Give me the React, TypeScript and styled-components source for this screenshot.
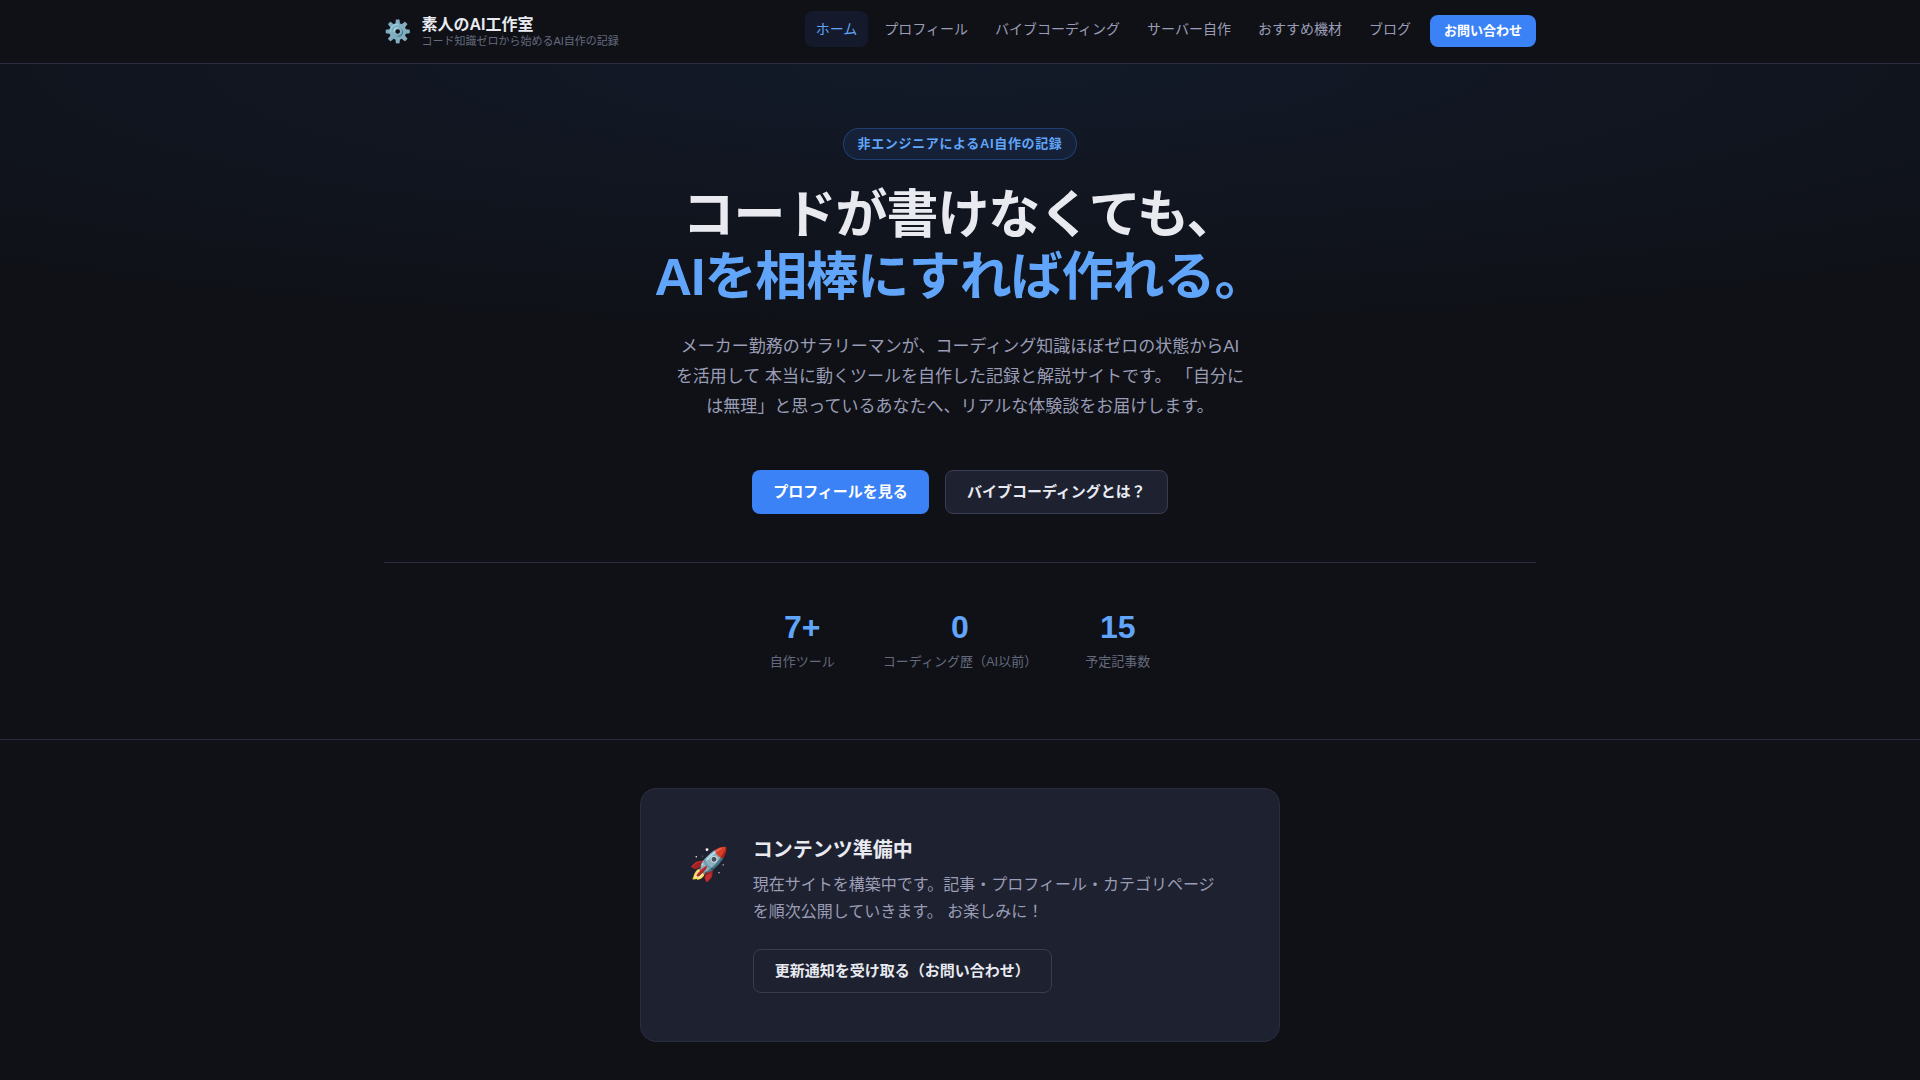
import React from "react";
import styled, { createGlobalStyle, css } from "styled-components";

const color = {
  bg: "#0f1117",
  surface: "#1e2130",
  border: "#2a2d3e",
  borderStrong: "#3a3d52",
  text: "#e8eaf0",
  muted: "#9a9db5",
  faint: "#656a7c",
  accent: "#3b82f6",
  accentLight: "#60a5fa",
};

const GlobalStyle = createGlobalStyle`
  *, *::before, *::after { box-sizing: border-box; }
  body {
    margin: 0;
    background: ${color.bg};
    color: ${color.text};
    font-family: "Liberation Sans", "Noto Sans CJK JP", "Noto Color Emoji", sans-serif;
    font-size: 16px;
    line-height: 27px;
  }
  h1, h2, p, ul, dl, dd { margin: 0; padding: 0; }
  ul { list-style: none; }
  a { text-decoration: none; color: inherit; }
`;

const Container = styled.div`
  max-width: 1200px;
  margin: 0 auto;
  padding: 0 24px;
`;

const Header = styled.header`
  position: sticky;
  top: 0;
  z-index: 10;
  background: ${color.bg};
  border-bottom: 1px solid ${color.border};
`;

const HeaderRow = styled(Container)`
  display: flex;
  align-items: center;
  justify-content: space-between;
  gap: 24px;
  min-height: 63px;
`;

const Brand = styled.a`
  display: flex;
  align-items: center;
  gap: 10px;
`;

const BrandIcon = styled.span`
  font-size: 22px;
  line-height: 28px;
`;

const BrandText = styled.span`
  display: flex;
  flex-direction: column;
`;

const BrandName = styled.span`
  font-size: 16px;
  font-weight: 700;
  line-height: 19px;
`;

const BrandTagline = styled.span`
  font-size: 11px;
  line-height: 15px;
  color: ${color.faint};
`;

const Nav = styled.nav`
  display: flex;
  align-items: center;
  gap: 8px;
  padding-bottom: 2px;
`;

const NavList = styled.ul`
  display: flex;
  align-items: center;
  gap: 5px;
  padding-bottom: 4px;
`;

const NavLink = styled.a<{ $active?: boolean }>`
  padding: 10px 11px;
  border-radius: 8px;
  font-size: 14px;
  color: ${(p) => (p.$active ? color.accentLight : color.muted)};
  background: ${(p) => (p.$active ? "#141a2b" : "transparent")};
`;

const ContactLink = styled.a`
  padding: 5px 14px;
  border-radius: 8px;
  background: ${color.accent};
  color: #fff;
  font-size: 13px;
  font-weight: 700;
  line-height: 22px;
`;

const Hero = styled.section`
  padding: 64px 0;
  text-align: center;
  border-bottom: 1px solid ${color.border};
  background: radial-gradient(ellipse 80% 40% at 50% 0%, rgba(59, 130, 246, 0.08), transparent);
`;

const Badge = styled.p`
  display: inline-block;
  padding: 4px 13px;
  border: 1px solid rgba(59, 130, 246, 0.3);
  border-radius: 20px;
  background: rgba(59, 130, 246, 0.1);
  color: ${color.accentLight};
  font-size: 13px;
  font-weight: 700;
  line-height: 22px;
  letter-spacing: 0.05em;
`;

const HeroTitle = styled.h1`
  margin-top: 24px;
  font-size: 52px;
  font-weight: 700;
  line-height: 62px;
  letter-spacing: -0.02em;
`;

const TitleAccent = styled.span`
  display: block;
  color: ${color.accentLight};
`;

const HeroLead = styled.p`
  max-width: 574px;
  margin: 24px auto 48px;
  color: ${color.muted};
  font-size: 17px;
  line-height: 30px;
`;

const ButtonRow = styled.div`
  display: flex;
  flex-wrap: wrap;
  justify-content: center;
  gap: 16px;
`;

const ButtonLink = styled.a<{ $variant: "primary" | "secondary" | "outline" }>`
  display: inline-block;
  padding: 9px 21px;
  border-radius: 8px;
  font-size: 15px;
  font-weight: 700;
  line-height: 24px;
  ${(p) =>
    p.$variant === "primary"
      ? css`
          padding-block: 10px;
          background: ${color.accent};
          color: #fff;
        `
      : css`
          border: 1px solid ${color.borderStrong};
          background: ${p.$variant === "secondary" ? color.surface : "transparent"};
          color: ${color.text};
        `}
`;

const Stats = styled.dl`
  display: flex;
  flex-wrap: wrap;
  justify-content: center;
  gap: 48px;
  margin-top: 48px;
  padding: 40px 0 2px;
  border-top: 1px solid ${color.border};
`;

const Stat = styled.div`
  display: flex;
  flex-direction: column-reverse;
`;

const StatValue = styled.dd`
  font-size: 32px;
  font-weight: 700;
  line-height: 48px;
  color: ${color.accentLight};
`;

const StatLabel = styled.dt`
  font-size: 13px;
  line-height: 22px;
  color: ${color.faint};
`;

const NoticeSection = styled.section`
  padding: 48px 0;
`;

const NoticeCard = styled.div`
  display: flex;
  align-items: flex-start;
  gap: 24px;
  max-width: 640px;
  margin: 0 auto;
  padding: 48px;
  border: 1px solid ${color.border};
  border-radius: 16px;
  background: ${color.surface};
`;

const NoticeIcon = styled.span`
  flex-shrink: 0;
  font-size: 32px;
  line-height: 54px;
`;

const NoticeBody = styled.div`
  min-width: 0;
`;

const NoticeTitle = styled.h2`
  margin-bottom: 8px;
  font-size: 20px;
  font-weight: 700;
  line-height: 26px;
`;

const NoticeText = styled.p`
  max-width: 472px;
  margin-bottom: 24px;
  color: ${color.muted};
`;

const navItems = [
  "ホーム",
  "プロフィール",
  "バイブコーディング",
  "サーバー自作",
  "おすすめ機材",
  "ブログ",
];

const stats = [
  { value: "7+", label: "自作ツール" },
  { value: "0", label: "コーディング歴（AI以前）" },
  { value: "15", label: "予定記事数" },
];

export default function App() {
  return (
    <>
      <GlobalStyle />
      <Header>
        <HeaderRow>
          <Brand href="#">
            <BrandIcon aria-hidden="true">⚙️</BrandIcon>
            <BrandText>
              <BrandName>素人のAI工作室</BrandName>
              <BrandTagline>コード知識ゼロから始めるAI自作の記録</BrandTagline>
            </BrandText>
          </Brand>
          <Nav>
            <NavList>
              {navItems.map((item, i) => (
                <li key={item}>
                  <NavLink href="#" $active={i === 0} aria-current={i === 0 ? "page" : undefined}>
                    {item}
                  </NavLink>
                </li>
              ))}
            </NavList>
            <ContactLink href="#">お問い合わせ</ContactLink>
          </Nav>
        </HeaderRow>
      </Header>
      <main>
        <Hero>
          <Container>
            <Badge>非エンジニアによるAI自作の記録</Badge>
            <HeroTitle>
              コードが書けなくても、
              <TitleAccent>AIを相棒にすれば作れる。</TitleAccent>
            </HeroTitle>
            <HeroLead>
              メーカー勤務のサラリーマンが、コーディング知識ほぼゼロの状態からAIを活用して
              本当に動くツールを自作した記録と解説サイトです。
              「自分には無理」と思っているあなたへ、リアルな体験談をお届けします。
            </HeroLead>
            <ButtonRow>
              <ButtonLink href="#" $variant="primary">プロフィールを見る</ButtonLink>
              <ButtonLink href="#" $variant="secondary">バイブコーディングとは？</ButtonLink>
            </ButtonRow>
            <Stats>
              {stats.map((s) => (
                <Stat key={s.label}>
                  <StatLabel>{s.label}</StatLabel>
                  <StatValue>{s.value}</StatValue>
                </Stat>
              ))}
            </Stats>
          </Container>
        </Hero>
        <NoticeSection>
          <Container>
            <NoticeCard>
              <NoticeIcon aria-hidden="true">🚀</NoticeIcon>
              <NoticeBody>
                <NoticeTitle>コンテンツ準備中</NoticeTitle>
                <NoticeText>
                  現在サイトを構築中です。記事・プロフィール・カテゴリページを順次公開していきます。
                  お楽しみに！
                </NoticeText>
                <ButtonLink href="#" $variant="outline">更新通知を受け取る（お問い合わせ）</ButtonLink>
              </NoticeBody>
            </NoticeCard>
          </Container>
        </NoticeSection>
      </main>
    </>
  );
}
